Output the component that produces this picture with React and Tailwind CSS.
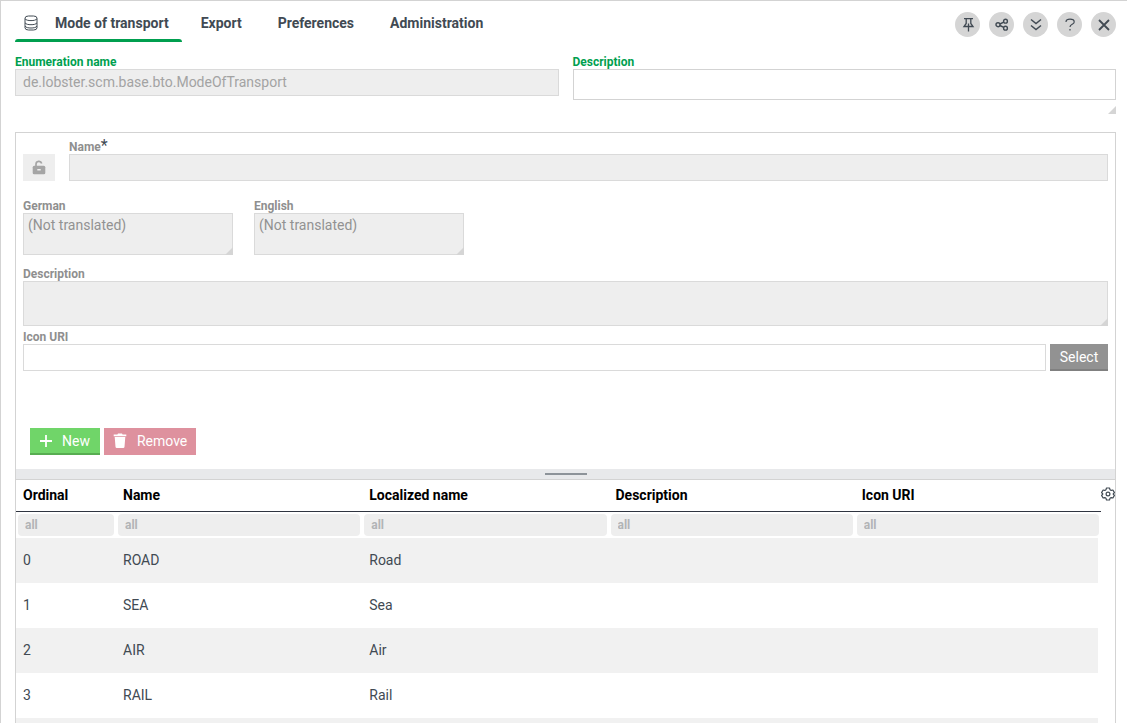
import React, { useState } from 'react';

const TABS = ['Export', 'Preferences', 'Administration'];

const COLUMNS = ['Ordinal', 'Name', 'Localized name', 'Description', 'Icon URI'];

const ROWS = [
  { ordinal: 0, name: 'ROAD', localized: 'Road' },
  { ordinal: 1, name: 'SEA', localized: 'Sea' },
  { ordinal: 2, name: 'AIR', localized: 'Air' },
  { ordinal: 3, name: 'RAIL', localized: 'Rail' },
  { ordinal: null, name: '', localized: '' },
];

const DatabaseIcon = () => (
  <svg width="15" height="17" viewBox="0 0 15 17" fill="none" stroke="#414a53" strokeWidth="1">
    <rect x="1" y="1" width="12" height="14" rx="3.500" ry="2.200" />
    <path d="M1 3.700c1 1.500 3.300 1.900 6 1.900s5-.4 6-1.900M1 7.800c1 1.500 3.300 1.900 6 1.900s5-.4 6-1.900M1 11.100c1 1.500 3.300 1.900 6 1.900s5-.4 6-1.900" />
  </svg>
);

const PinIcon = () => (
  <svg width="14" height="16" viewBox="0 0 14 16" fill="none" stroke="#414a53" strokeWidth="1.300">
    <path d="M3 1.700h9M5.200 2v4.500L3 9.500h9L9.800 6.500V2M7.500 6.500V14.500" />
  </svg>
);

const ShareIcon = () => (
  <svg width="14" height="14" viewBox="0 0 14 14" fill="none" stroke="#414a53" strokeWidth="1.400">
    <circle cx="3" cy="6.700" r="2" />
    <circle cx="10.500" cy="3.200" r="1.900" />
    <circle cx="10.500" cy="10.200" r="1.900" />
    <path d="M5 6l3.700-1.800M5 7.500l3.700 1.800" />
  </svg>
);

const ChevronsIcon = () => (
  <svg width="14" height="14" viewBox="0 0 14 14" fill="none" stroke="#414a53" strokeWidth="1.500">
    <path d="M2 1.500l5 4 5-4M2 7.500l5 4 5-4" />
  </svg>
);

const HelpIcon = () => (
  <svg width="14" height="14" viewBox="0 0 14 14" fill="none" stroke="#414a53" strokeWidth="1.200">
    <path d="M3 4C3 1.800 4.500 1.200 7 1.200s4.200.6 4.200 2.700C11.200 6.500 7 6 7 9M7 11v1.500" />
  </svg>
);

const CloseIcon = () => (
  <svg width="14" height="14" viewBox="0 0 14 14" fill="none" stroke="#414a53" strokeWidth="1.800">
    <path d="M2 2l10 10M12 2L2 12" />
  </svg>
);

const LockIcon = () => (
  <svg width="14" height="16" viewBox="0 0 14 16" fill="none">
    <path d="M4 6.500V4.200a2.900 2.900 0 0 1 5.700-.7" stroke="#a5a5a5" strokeWidth="1.700" />
    <rect x="0.700" y="5.700" width="12.600" height="8.600" rx="1.500" fill="#a5a5a5" />
    <rect x="5.300" y="9" width="3.400" height="1.500" fill="#eee" />
  </svg>
);

const PlusIcon = () => (
  <svg width="12" height="12" viewBox="0 0 12 12" stroke="#fff" strokeWidth="1.800">
    <path d="M6 0v12M0 6h12" />
  </svg>
);

const TrashIcon = () => (
  <svg width="14" height="16" viewBox="0 0 14 16" fill="#fff">
    <path d="M5 .5h4l.6 1h3.700v1.800H.7V1.500h3.700zM1.700 4h10.600l-.8 9.700a1.300 1.300 0 0 1-1.300 1.200H3.800a1.300 1.300 0 0 1-1.300-1.200z" />
  </svg>
);

const GearIcon = () => (
  <svg width="14" height="14" viewBox="0 0 14 14" fill="none" stroke="#414a53" strokeWidth="1.200" strokeLinejoin="round">
    <path d="M5.500 1h3l.5 1.700 1.200.7 1.700-.4 1.500 2.600L12.200 7l1.200 1.400-1.500 2.600-1.700-.4-1.200.7-.5 1.700h-3L5 11.300l-1.200-.7-1.700.4L.6 8.400 1.800 7 .6 5.600 2.100 3l1.700.4L5 2.700z" />
    <circle cx="7" cy="7" r="1.900" />
  </svg>
);

const Grip = ({ className }) => (
  <svg className={`pointer-events-none absolute right-0 ${className}`} width="8" height="8" viewBox="0 0 8 8" fill="#d5d5d5">
    <path d="M8 0v8H0z" />
  </svg>
);

const ACTIONS = [
  { label: 'Pin', icon: PinIcon },
  { label: 'Share', icon: ShareIcon },
  { label: 'Collapse', icon: ChevronsIcon },
  { label: 'Help', icon: HelpIcon },
  { label: 'Close', icon: CloseIcon },
];

const Label = ({ htmlFor, green, children }) => (
  <label
    htmlFor={htmlFor}
    className={`block text-xs leading-[14px] font-bold ${green ? 'text-[#009f4f]' : 'text-[#8f8f8f]'}`}
  >
    {children}
  </label>
);

const Area = ({ id, label, placeholder, className }) => (
  <div className={`flex flex-col ${className}`}>
    <Label htmlFor={id}>{label}</Label>
    <div className="relative min-h-0 flex-1">
      <textarea
        id={id}
        disabled
        placeholder={placeholder}
        className="block h-full w-full resize-none border border-[#dadada] bg-[#eee] px-1 py-px text-sm placeholder:text-[#929292]"
      />
      <Grip className="bottom-0" />
    </div>
  </div>
);

export default function App() {
  const [description, setDescription] = useState('');
  const [iconUri, setIconUri] = useState('');

  return (
    <div className="flex h-screen flex-col overflow-hidden border-t border-l border-[#d3d3d3] bg-white pr-[11px] pl-3.5 font-[Roboto,sans-serif] text-sm text-[#414a53]">
      {/* Tab bar */}
      <header className="flex shrink-0 items-start justify-between">
        <nav className="flex font-bold">
          <button className="relative flex h-[41px] items-center gap-4 pt-[3px] pr-[13px] pl-[9px]">
            <DatabaseIcon />
            Mode of transport
            <span className="absolute inset-x-0 bottom-0 h-[3px] rounded-t-[3px] bg-[#009f4f]" />
          </button>
          <div className="flex gap-9 pt-[3px] pl-[19px]">
            {TABS.map((tab) => (
              <button key={tab}>{tab}</button>
            ))}
          </div>
        </nav>
        <div className="flex gap-[9px] pt-[11px]">
          {ACTIONS.map(({ label, icon: Icon }) => (
            <button
              key={label}
              aria-label={label}
              className="flex size-[25px] items-center justify-center rounded-full bg-[#d5d5d5]"
            >
              <Icon />
            </button>
          ))}
        </div>
      </header>

      {/* Enumeration */}
      <section className="grid h-[90px] shrink-0 grid-cols-2 gap-3.5 pt-[13px]">
        <div>
          <Label htmlFor="enumeration" green>Enumeration name</Label>
          <input
            id="enumeration"
            disabled
            value="de.lobster.scm.base.bto.ModeOfTransport"
            className="block h-[27px] w-full border border-[#dadada] bg-[#eee] px-[7px] pb-0.5 text-[#a3a3a3]"
          />
        </div>
        <div className="relative">
          <Label htmlFor="enumeration-description" green>Description</Label>
          <textarea
            id="enumeration-description"
            value={description}
            onChange={(e) => setDescription(e.target.value)}
            className="block h-[31px] w-full resize-none border border-[#d3d3d3] px-1 py-px outline-none"
          />
          <Grip className="bottom-[18px]" />
        </div>
      </section>

      <main className="flex min-h-0 flex-1 flex-col border border-b-0 border-[#d3d3d3]">
        {/* Entry form */}
        <form className="shrink-0 px-[7px] pt-[5px] pb-3.5">
          <div className="flex items-end gap-3.5">
            <button type="button" disabled aria-label="Unlock" className="flex h-[27px] w-8 items-center justify-center bg-[#eee]">
              <LockIcon />
            </button>
            <div className="flex-1">
              <Label htmlFor="name">
                Name<span className="text-base leading-none font-normal text-[#414a53]">*</span>
              </Label>
              <input id="name" disabled className="block h-[27px] w-full border border-[#dadada] bg-[#eee] px-[7px]" />
            </div>
          </div>

          <div className="mt-[18px] flex gap-[21px]">
            <Area id="german" label="German" placeholder="(Not translated)" className="h-14 w-[210px]" />
            <Area id="english" label="English" placeholder="(Not translated)" className="h-14 w-[210px]" />
          </div>

          <Area id="description" label="Description" className="mt-3 h-[59px]" />

          <div className="mt-1 flex items-end gap-1">
            <div className="flex-1">
              <Label htmlFor="icon-uri">Icon URI</Label>
              <input
                id="icon-uri"
                value={iconUri}
                onChange={(e) => setIconUri(e.target.value)}
                className="block h-[27px] w-full border border-[#dadada] px-[7px] outline-none"
              />
            </div>
            <button type="button" className="h-[27px] w-[58px] border-b-2 border-[#808080] bg-[#929292] text-white">
              Select
            </button>
          </div>

          <div className="mt-[57px] flex gap-1 pl-[7px] text-white">
            <button type="button" className="flex h-[27px] items-center gap-2.5 border-b-2 border-[#57ad51] bg-[#70d569] px-2.5">
              <PlusIcon />
              New
            </button>
            <button type="button" disabled className="flex h-[27px] items-center gap-2.5 bg-[#de919e] px-[9px] pb-0.5">
              <TrashIcon />
              Remove
            </button>
          </div>
        </form>

        {/* Splitter */}
        <div className="flex h-[11px] shrink-0 justify-center border-b border-[#d3d3d3] bg-[#e8e9eb] pt-1">
          <div className="h-0.5 w-[42px] bg-[#8d9399]" />
        </div>

        {/* Entries */}
        <div className="flex min-h-0 flex-1 items-start overflow-hidden">
          <table className="min-w-0 flex-1 table-fixed border-separate border-spacing-0 text-left">
            <colgroup>
              <col className="w-[100px]" />
              <col />
              <col />
              <col />
              <col />
            </colgroup>
            <thead>
              <tr>
                {COLUMNS.map((column) => (
                  <th key={column} className="h-8 border-b border-[#2f3440] px-[7px] pb-0.5 font-bold text-black">
                    {column}
                  </th>
                ))}
              </tr>
              <tr>
                {COLUMNS.map((column) => (
                  <th key={column} className="p-0.5">
                    <input
                      aria-label={`Filter ${column}`}
                      placeholder="all"
                      className="block h-[22px] w-full rounded-sm bg-[#eee] px-[7px] text-xs font-bold outline-none placeholder:text-[#b2b4b6]"
                    />
                  </th>
                ))}
              </tr>
            </thead>
            <tbody>
              {ROWS.map((row, i) => (
                <tr key={i} className="odd:bg-[#f1f1f1]">
                  <td className="h-[45px] px-[7px] pb-0.5">{row.ordinal}</td>
                  <td className="px-[7px] pb-0.5">{row.name}</td>
                  <td className="px-[7px] pb-0.5">{row.localized}</td>
                  <td />
                  <td className="border-r-[3px] border-white" />
                </tr>
              ))}
            </tbody>
          </table>
          <button aria-label="Table settings" className="pt-[7px]">
            <GearIcon />
          </button>
        </div>
      </main>
    </div>
  );
}
